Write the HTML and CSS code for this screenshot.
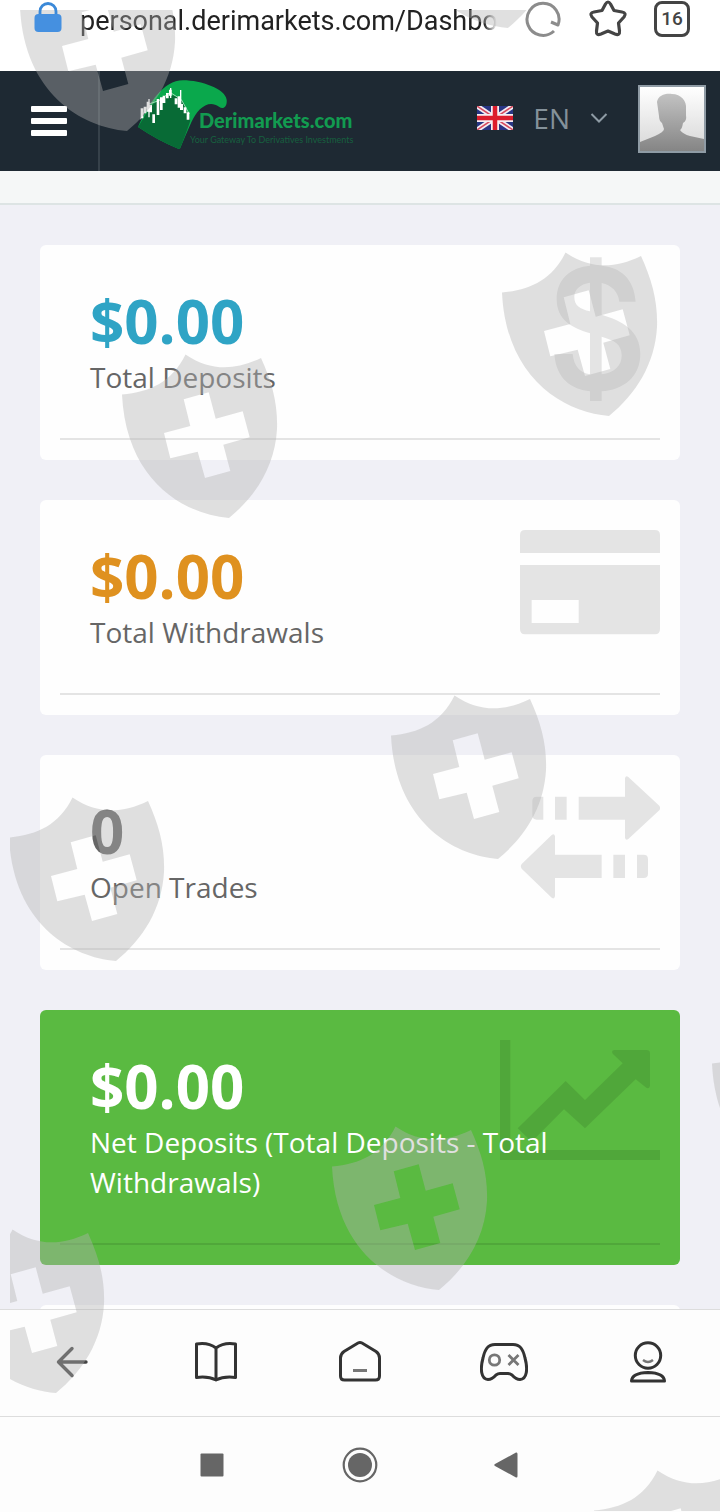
FILE: index.html
```html
<!DOCTYPE html>
<html lang="en">
<head>
<meta charset="utf-8">
<meta name="viewport" content="width=device-width, initial-scale=1">
<title>Dashboard</title>
<link rel="stylesheet" href="styles.css">
</head>
<body>
<div class="screen">
  <header class="browser-bar">
    <svg class="lock" viewBox="0 0 28 31" aria-hidden="true"><path d="M6 14V9.500a8 8 0 0 1 16 0V14" fill="none" stroke="#3b89d8" stroke-width="2.800"/><rect x="0.500" y="12" width="27" height="18" rx="4" fill="#4590e0"/></svg>
    <span class="address">personal.derimarkets.com/Dashbo</span>
    <button class="icon-btn" aria-label="Reload"><svg width="38" height="38" viewBox="0 0 38 38"><path d="M30 31A16 16 0 1 1 34 25L27 22" fill="none" stroke="#8c8c8c" stroke-width="3" stroke-linejoin="round"/></svg></button>
    <button class="icon-btn" aria-label="Bookmark"><svg width="40" height="40" viewBox="0 0 40 40"><path d="M17.500 4Q20 0 22.500 4L26 10.500L34 12Q39 13 36 17L30.500 23L31.500 31Q32 36 27 34L20 31L13 34Q8 36 8.500 31L9.500 23L4 17Q1 13 6 12L14 10.500Z" fill="none" stroke="#444" stroke-width="3.200" stroke-linejoin="round"/></svg></button>
    <button class="tabs" aria-label="16 open tabs">16</button>
  </header>

  <nav class="navbar">
    <button class="menu" aria-label="Menu"><span class="line"></span><span class="line"></span><span class="line"></span></button>
    <a class="logo" href="#">
      <svg class="logo-mark" viewBox="0 0 270 210" aria-hidden="true">
        <path d="M0 144C35 70 75 5 135 4C190 4 262 30 266 62C268 85 255 92 243 83C210 60 178 90 160 130Q140 175 125 211Q60 185 0 144Z" fill="#0aa84c"/>
        <path d="M0 144L38 82C65 60 80 48 110 50C140 58 145 95 157 125Q140 175 125 211Q60 185 0 144Z" fill="#086b36"/>
        <path d="M7 121L32 75L63 65L96 40L130 62L154 105" fill="none" stroke="#e8fff0" stroke-width="2"/>
        <path d="M12 88v30M21 83v20M30 68v30M38 78v22M47 106v26M60 60v48M70 55v38M78 50v22M88 42v16M97 32v18M114 58v18M123 52v34M131 75v18M141 85v18M150 100v22" stroke="#fff" stroke-width="8"/>
        <path d="M33 60v55M98 27v30M128 33v60" stroke="#fff" stroke-width="4"/>
      </svg>
      <span class="logo-text"><span class="logo-name">Derimarkets.com</span><span class="logo-tag">Your Gateway To Derivatives Investments</span></span>
    </a>
    <button class="language">
      <svg width="36" height="24" viewBox="0 0 36 24" aria-hidden="true"><path fill="#283583" d="M0 0h36v24H0z"/><path d="M0 0L36 24M36 0L0 24" stroke="#f3edf3" stroke-width="5"/><path d="M0 0L36 24M36 0L0 24" stroke="#d64b5e" stroke-width="1.500"/><path d="M18 0v24M0 12h36" stroke="#f5eef2" stroke-width="8"/><path d="M18 0v24M0 12h36" stroke="#dc1c2c" stroke-width="4.500"/></svg>
      <span>EN</span>
      <svg width="18" height="12" viewBox="0 0 18 12" aria-hidden="true"><path d="M1.500 2L9 9.500L16.500 2" fill="none" stroke="#8e9ba5" stroke-width="2"/></svg>
    </button>
    <button class="avatar" aria-label="Profile">
      <svg viewBox="0 0 64 64"><defs><linearGradient id="bg" x2="0" y2="1"><stop stop-color="#fff"/><stop offset="1" stop-color="#d6d6d6"/></linearGradient><linearGradient id="man" x2="0" y2="1"><stop stop-color="#c2c2c2"/><stop offset="1" stop-color="#858585"/></linearGradient></defs><path fill="url(#bg)" d="M0 0h64v64H0z"/><path fill="url(#man)" d="M17 15C18 8 26 6 32 7C41 7 47 14 46 22V28Q47 34 43 36Q42 42 40 43Q43 47 50 49L64 52V64H0V55L15 49Q24 45 24 42L22 36Q19 34 19 29Z"/></svg>
    </button>
  </nav>
  <div class="subbar"></div>

  <main class="cards">
    <section class="card">
      <svg class="card-icon" viewBox="0 0 480 450" aria-hidden="true"><path transform="translate(160 7)" d="M110 0H145V25C200 30 242 62 247 133H198C195 104 176 84 145 77V172C205 190 261 218 261 290C261 360 208 398 145 402V431H110V402C55 396 8 365 3 290H58C62 327 80 346 110 351V228C58 212 10 190 10 125C10 65 52 30 110 25ZM110 76C80 81 63 96 63 118C63 146 80 154 110 162ZM145 238V351C182 346 205 325 205 295C205 260 183 249 145 238Z" fill-rule="evenodd"/></svg>
      <h2 class="value blue">$0.00</h2>
      <p class="label">Total Deposits</p>
      <hr class="rule">
    </section>
    <section class="card">
      <svg class="card-icon" viewBox="0 0 480 450" aria-hidden="true"><path fill-rule="evenodd" d="M60 129V75Q60 60 75 60H465Q480 60 480 75V129ZM60 165H480V358Q480 373 465 373H75Q60 373 60 358ZM95 270V339H236V270Z"/></svg>
      <h2 class="value orange">$0.00</h2>
      <p class="label">Total Withdrawals</p>
      <hr class="rule">
    </section>
    <section class="card">
      <svg class="card-icon" viewBox="0 0 480 450" aria-hidden="true"><path d="M130 164V95H110Q97 95 97 108V151Q97 164 110 164ZM165 95H200V164H165ZM236 95H375V40Q377 30 385 36L478 122Q483 129 478 136L385 222Q377 228 375 218V164H236ZM305 269V339H165V394Q163 404 155 398L65 311Q60 304 65 297L155 210Q163 204 165 214V269ZM340 269H375V339H340ZM411 269H431Q444 269 444 282V326Q444 339 431 339H411Z"/></svg>
      <h2 class="value gray">0</h2>
      <p class="label">Open Trades</p>
      <hr class="rule">
    </section>
    <section class="card green">
      <svg class="card-icon" viewBox="0 0 480 450" aria-hidden="true"><path d="M0 60H31V390H480V420H0ZM53 325L197 183L255 240L368 130L338 101Q333 90 343 90H440Q450 90 450 100V198Q447 209 437 202L407 178L255 325L192 268L95 365Z"/></svg>
      <h2 class="value">$0.00</h2>
      <p class="label">Net Deposits (Total Deposits - Total Withdrawals)</p>
      <hr class="rule">
    </section>
    <section class="card"></section>
  </main>

  <nav class="toolbar">
    <button class="tool" aria-label="Back"><svg viewBox="0 0 48 48"><path d="M38 23H10.500M24 9.500L10.500 23L24 36.500" fill="none" stroke="#444" stroke-width="3.400" stroke-linecap="round" stroke-linejoin="round"/></svg></button>
    <button class="tool" aria-label="Reading list"><svg viewBox="0 0 48 48"><path d="M24 9Q16 3 4.500 5V38.500Q16 37 24 41Q32 37 43.500 38.500V5Q32 3 24 9ZM24 9V41" fill="none" stroke="#333" stroke-width="3" stroke-linejoin="round"/></svg></button>
    <button class="tool" aria-label="Home"><svg viewBox="0 0 48 48"><path d="M22 4Q24 3 26 4L40 12.500Q43.500 15 43.500 19V37Q43.500 41 39.500 41H8.500Q4.500 41 4.500 37V19Q4.500 15 8 12.500Z" fill="none" stroke="#333" stroke-width="3"/><path d="M17 31.500H31" stroke="#777" stroke-width="3"/></svg></button>
    <button class="tool" aria-label="Games"><svg viewBox="0 0 48 48"><path d="M15 5.500H33C40 5.500 43 10 45 19C48 30 47 40 40 40.500Q36 40.500 32 36Q30 34.500 28 34.500H20Q18 34.500 16 36Q12 40.500 8 40.500C1 40 0 30 3 19C5 10 8 5.500 15 5.500Z" fill="none" stroke="#333" stroke-width="3"/><circle cx="14.500" cy="21" r="5.200" fill="none" stroke="#777" stroke-width="2.800"/><path d="M28.500 16L38.500 26M38.500 16L28.500 26" stroke="#777" stroke-width="2.800"/></svg></button>
    <button class="tool" aria-label="Account"><svg viewBox="0 0 48 48"><circle cx="24" cy="16.500" r="12.700" fill="none" stroke="#333" stroke-width="3"/><path d="M19 21Q24 25 29 21" fill="none" stroke="#777" stroke-width="2.400"/><path d="M7.500 42Q8 34 24 33.500Q40 34 40.500 42Z" fill="none" stroke="#333" stroke-width="3" stroke-linejoin="round"/></svg></button>
  </nav>
  <nav class="system-nav">
    <button class="sys" aria-label="Recent apps"><svg viewBox="0 0 36 36"><rect x="6.500" y="6.500" width="23" height="23" rx="1" fill="#666"/></svg></button>
    <button class="sys" aria-label="Home screen"><svg viewBox="0 0 36 36"><circle cx="18" cy="18" r="16.300" fill="none" stroke="#666" stroke-width="2.200"/><circle cx="18" cy="18" r="12" fill="#666"/></svg></button>
    <button class="sys" aria-label="System back"><svg viewBox="0 0 36 36"><path d="M5 17L26 5.500Q27.500 5 27.500 7V29Q27.500 31 26 30.500L5 19Q3.500 18 5 17Z" fill="#666"/></svg></button>
  </nav>

  <svg class="watermark" viewBox="0 0 720 1512" preserveAspectRatio="xMinYMin meet" aria-hidden="true">
    <defs>
      <path id="shield" fill-rule="evenodd" d="M0 40.500C28 38 50 28 63.500 0.500C88 17 112 17 139 4C150 28 156 50 155 75C153 112 134 142 107 164C60 160 4 125 0 40.500ZM61.700 45.300L86.700 38.300L93.700 64.700L120.700 57.300L127.700 83.300L101.300 90.700L108.300 117L83 124L75.700 97.700L48.300 104.300L42 79L68.300 72Z"/>
      <clipPath id="frame"><path d="M10 10H720V1511H10Z"/></clipPath>
    </defs>
    <g fill="#b1b1b1" fill-opacity="0.400" clip-path="url(#frame)">
      <use href="#shield" x="20" y="-33"/>
      <use href="#shield" x="401" y="-136"/>
      <use href="#shield" x="502" y="252"/>
      <use href="#shield" x="122" y="354"/>
      <use href="#shield" x="391" y="695"/>
      <use href="#shield" x="9" y="797"/>
      <use href="#shield" x="712" y="1023"/>
      <use href="#shield" x="332" y="1126"/>
      <use href="#shield" x="-51" y="1229"/>
      <use href="#shield" x="594" y="1470"/>
    </g>
  </svg>
</div>
</body>
</html>
```

FILE: styles.css
```css
* { box-sizing: border-box; }
body { margin: 0; font-family: "Open Sans", "Noto Sans", sans-serif; background: #fdfdfd; }
button { border: 0; padding: 0; background: none; color: inherit; font: inherit; }
svg { display: block; }
h2, p { margin: 0; }

.screen { position: relative; display: flex; flex-direction: column; height: 100vh; overflow: hidden; }

.browser-bar { display: flex; align-items: flex-start; flex: none; height: 71px; padding: 0 30px 0 34px; background: #fff; }
.lock { position: relative; z-index: 1; width: 28px; height: 31px; margin: 2px 18px 0 0; flex: none; }
.address { flex: 1; min-width: 0; white-space: nowrap; font: 27px/42px Roboto, sans-serif; color: #222; -webkit-mask-image: linear-gradient(to left, transparent 3px, #000 16px); mask-image: linear-gradient(to left, transparent 3px, #000 16px); }
.icon-btn { display: flex; flex: none; width: 40px; margin-left: 24px; }
.tabs { flex: none; width: 36px; height: 36px; margin: 1px 0 0 26px; border: 3px solid #444; border-radius: 8px; font: 500 19px/30px Roboto, sans-serif; color: #444; text-align: center; }

.navbar { display: flex; align-items: center; flex: none; height: 100px; padding-right: 14px; background: #1e2933; }
.menu { display: flex; flex-direction: column; justify-content: center; align-items: center; gap: 6px; align-self: stretch; width: 100px; border-right: 2px solid #36414a; }
.line { width: 36px; height: 6px; border-radius: 1px; background: #fff; }
.logo { display: flex; flex: 1; align-self: stretch; min-width: 0; margin-left: 38px; padding-top: 8px; color: #129b50; text-decoration: none; }
.logo-mark { width: 90px; height: 70px; flex: none; }
.logo-text { display: flex; flex-direction: column; margin: 29px 0 0 -38px; white-space: nowrap; }
.logo-name { padding-left: 9px; font: 900 20px/24px Lato, sans-serif; }
.logo-tag { font: 9px/12px Lato, sans-serif; margin-top: 2px; color: #17603f; }
.language { display: flex; align-items: center; gap: 20px; margin: 0 30px 6px 0; font-size: 28px; line-height: 40px; color: #84919a; }
.language span { font-weight: 400; }
.avatar { width: 68px; height: 68px; margin-bottom: 4px; border: 2px solid #8f9ba5; }
.avatar svg { width: 100%; height: 100%; }
.subbar { flex: none; height: 34px; border-bottom: 2px solid #dde4e4; background: #f5f7f7; }

.cards { display: flex; flex-direction: column; gap: 40px; flex: 1; min-height: 0; padding: 40px; overflow: hidden; background: #f0f0f6; }
.card { position: relative; flex: none; min-height: 40px; padding: 46px 20px 20px; border-radius: 6px; background: #fefefe; color: #666; }
.card-icon { position: absolute; top: 10px; right: 20px; width: 160px; height: 150px; fill: rgba(0, 0, 0, .1); }
.value { position: relative; margin: 0 30px 6px; font-size: 60px; line-height: 60px; font-weight: 700; }
.label { position: relative; margin: 0 30px 41px; font-size: 28px; line-height: 40px; }
.rule { height: 2px; margin: 0; border: 0; background: rgba(0, 0, 0, .1); }
.blue { color: #2fa4c5; }
.orange { color: #df911f; }
.gray { color: #666; }
.green { background: #5aba41; color: #fff; }

.toolbar { display: flex; flex: none; height: 107px; border-top: 1px solid #ddd; background: #fdfdfd; }
.tool { display: flex; flex: 1; align-items: center; justify-content: center; }
.tool svg { width: 48px; height: 48px; }
.system-nav { display: flex; justify-content: center; gap: 112px; flex: none; height: 96px; border-top: 1px solid #ddd; background: #fdfdfd; }
.sys { display: flex; align-items: center; width: 36px; }
.sys svg { width: 36px; height: 36px; }

.watermark { position: absolute; top: 0; left: 0; width: 100%; height: 100%; pointer-events: none; }
```
